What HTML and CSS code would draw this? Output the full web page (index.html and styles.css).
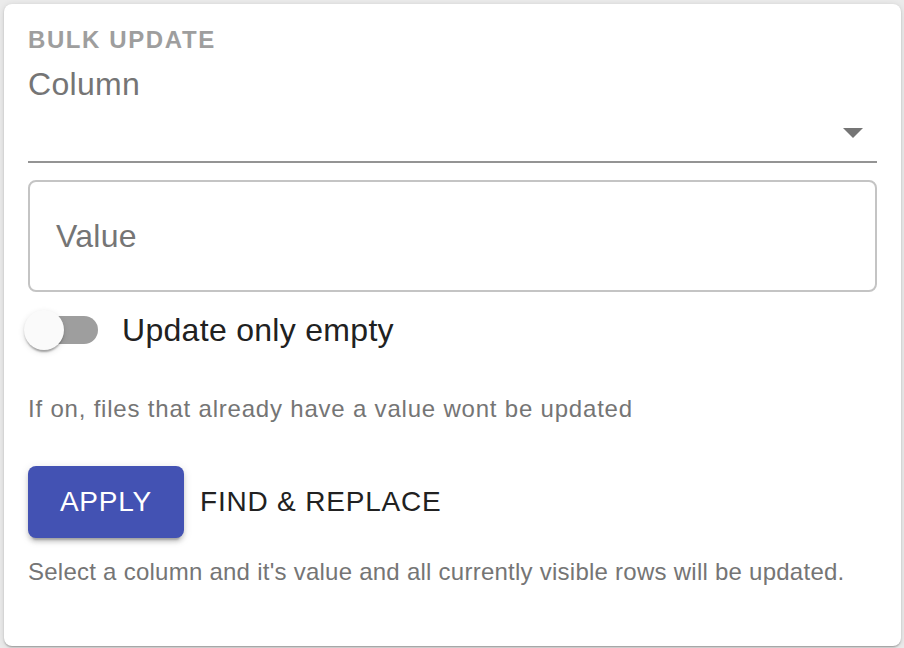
FILE: index.html
```html
<!DOCTYPE html>
<html>
<head>
<meta charset="utf-8">
<link rel="stylesheet" href="styles.css">
</head>
<body>
<div class="card">
  <div class="title">BULK UPDATE</div>
  <div class="select">
    <div class="select-label">Column</div>
    <div class="select-row">
      <svg class="select-icon" viewBox="0 0 24 24" width="48" height="48"><path d="M7 10l5 5 5-5z" fill="#757575"/></svg>
    </div>
  </div>
  <div class="outlined">
    <span class="placeholder">Value</span>
  </div>
  <div class="switch-row">
    <div class="switch">
      <span class="track"></span>
      <span class="thumb"></span>
    </div>
    <span class="switch-label">Update only empty</span>
  </div>
  <div class="helper">If on, files that already have a value wont be updated</div>
  <div class="actions">
    <button class="btn btn-contained">APPLY</button>
    <button class="btn btn-text">FIND &amp; REPLACE</button>
  </div>
  <div class="note">Select a column and it's value and all currently visible rows will be updated.</div>
</div>
</body>
</html>
```

FILE: styles.css
```css
html, body {
  margin: 0;
  padding: 0;
}
body {
  background: #ebebeb;
  font-family: "Liberation Sans", Arial, sans-serif;
  width: 904px;
  height: 648px;
  overflow: hidden;
}
.card {
  box-sizing: border-box;
  margin: 4px 0 0 4px;
  width: 897px;
  height: 642px;
  background: #fff;
  border-radius: 8px;
  box-shadow: 0 2px 2px -1px rgba(0,0,0,0.2), 0 1px 2px 0 rgba(0,0,0,0.14), 0 1px 6px 0 rgba(0,0,0,0.12);
  padding: 24px 24px 0 24px;
}
.title {
  font-weight: bold;
  font-size: 24px;
  line-height: 24px;
  letter-spacing: 1.6px;
  color: #9e9e9e;
}
.select {
  margin-top: 16px;
  border-bottom: 2px solid #949494;
}
.select-label {
  font-size: 32px;
  line-height: 32px;
  letter-spacing: 0.3px;
  color: #757575;
}
.select-row {
  height: 61px;
  display: flex;
  justify-content: flex-end;
  align-items: flex-start;
}
.select-icon {
  display: block;
  margin-top: 8px;
}
.outlined {
  margin-top: 17px;
  box-sizing: border-box;
  height: 112px;
  border: 2px solid #c4c4c4;
  border-radius: 8px;
  display: flex;
  align-items: center;
  padding-left: 26px;
}
.placeholder {
  font-size: 32px;
  letter-spacing: 0.3px;
  color: #757575;
}
.switch-row {
  display: flex;
  align-items: center;
  margin-left: -22px;
  height: 76px;
}
.switch {
  position: relative;
  width: 116px;
  height: 76px;
  flex: none;
}
.track {
  position: absolute;
  left: 24px;
  top: 24px;
  width: 68px;
  height: 28px;
  border-radius: 14px;
  background: #9e9e9e;
}
.thumb {
  position: absolute;
  left: 18px;
  top: 18px;
  width: 40px;
  height: 40px;
  border-radius: 50%;
  background: #fafafa;
  box-shadow: 0 4px 2px -2px rgba(0,0,0,0.2), 0 2px 2px 0 rgba(0,0,0,0.14), 0 2px 6px 0 rgba(0,0,0,0.12);
}
.switch-label {
  font-size: 32px;
  letter-spacing: 0.3px;
  color: #212121;
}
.helper {
  margin-top: 21px;
  font-size: 24px;
  line-height: 40px;
  letter-spacing: 0.8px;
  color: #757575;
}
.actions {
  margin-top: 37px;
  display: flex;
  align-items: center;
}
.btn {
  font-family: "Liberation Sans", Arial, sans-serif;
  font-weight: normal;
  font-size: 28px;
  letter-spacing: 0.8px;
  border: none;
  border-radius: 8px;
  height: 72px;
  padding: 0 32px;
  cursor: pointer;
}
.btn-contained {
  background: #4352b3;
  color: #fff;
  width: 156px;
  padding: 0;
  box-shadow: 0 6px 2px -4px rgba(0,0,0,0.2), 0 4px 4px 0 rgba(0,0,0,0.14), 0 2px 10px 0 rgba(0,0,0,0.12);
}
.btn-text {
  background: transparent;
  color: #212121;
  padding: 0 16px;
}
.note {
  margin-top: 16px;
  font-size: 24px;
  line-height: 36px;
  letter-spacing: 0.25px;
  color: #757575;
  white-space: nowrap;
}
```
